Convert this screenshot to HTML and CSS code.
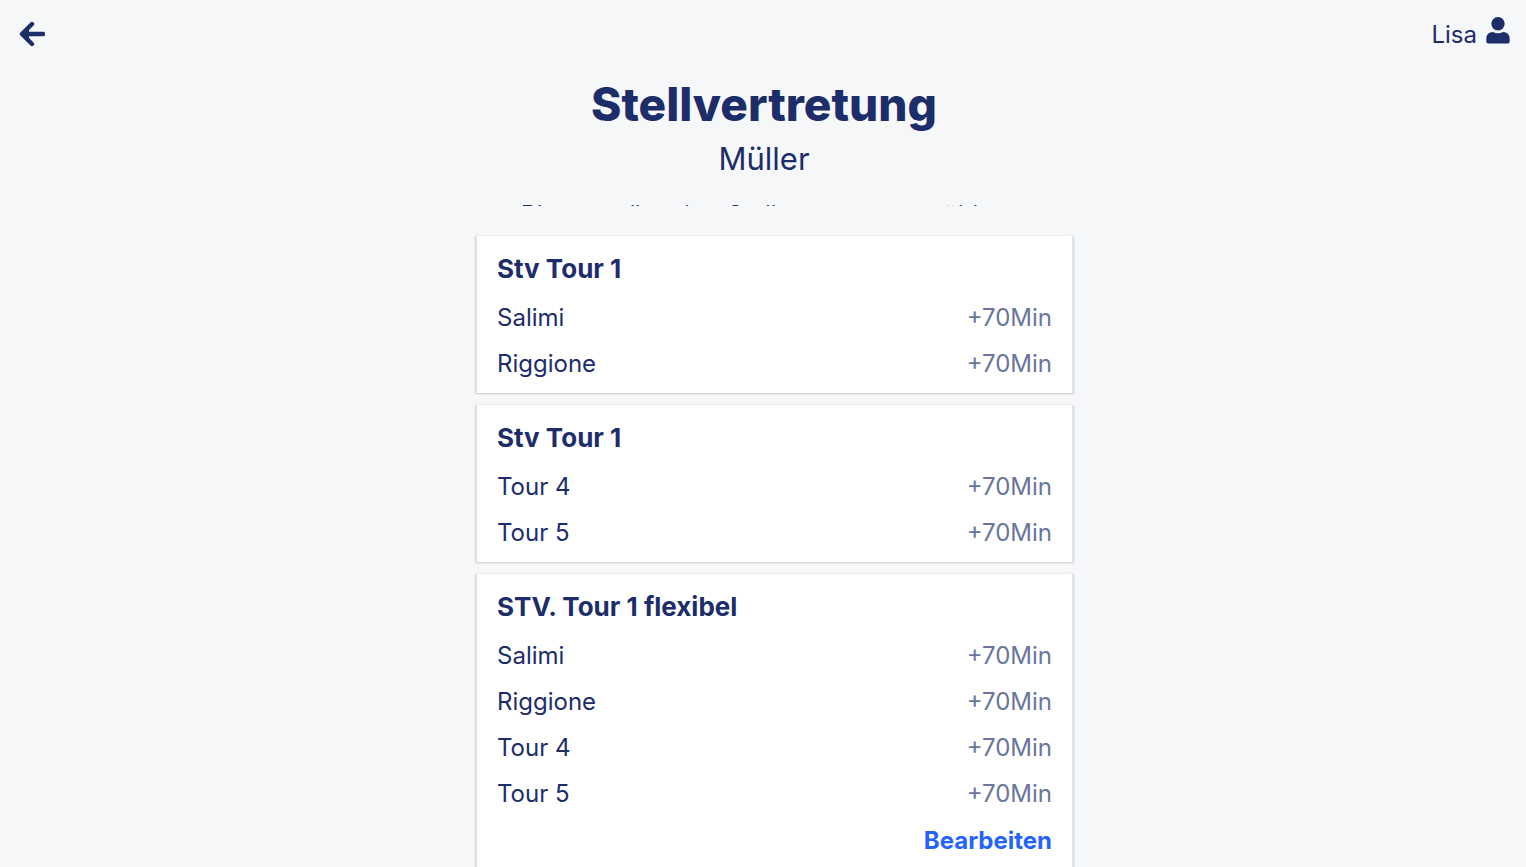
FILE: index.html
```html
<!DOCTYPE html>
<html lang="de">
<head>
  <meta charset="UTF-8">
  <meta name="viewport" content="width=device-width, initial-scale=1.0">
  <title>Stellvertretung</title>
  <link rel="stylesheet" href="styles.css">
</head>
<body>
  <nav class="topbar">
    <a class="back" href="#" aria-label="Zurück">
      <svg viewBox="0 0 26 26" width="26" height="26">
        <path d="M13 3L3 13l10 10M4 13h20" fill="none" stroke="currentColor" stroke-width="4.4" stroke-linecap="round" stroke-linejoin="round"/>
        <path d="M3 13l7-7v14z"/>
      </svg>
    </a>
    <a class="user" href="#">
      <span>Lisa</span>
      <svg viewBox="0 0 24 28" width="24" height="28">
        <circle cx="12" cy="6.700" r="6.700"/>
        <path d="M7 15c3 1.600 7 1.600 10 0 4.500 0 6.700 3 6.700 7v2.500q0 2-2 2H2.300q-2 0-2-2V22c0-4 2.200-7 6.700-7z"/>
      </svg>
    </a>
  </nav>

  <header class="page-header">
    <h1>Stellvertretung</h1>
    <h2>Müller</h2>
    <p class="hint">Bitte gewünschte Stellvertreter auswählen</p>
  </header>

  <main class="list">
    <section class="card">
      <h3>Stv Tour 1</h3>
      <ul>
        <li><span>Salimi</span><span class="time">+70Min</span></li>
        <li><span>Riggione</span><span class="time">+70Min</span></li>
      </ul>
    </section>
    <section class="card">
      <h3>Stv Tour 1</h3>
      <ul>
        <li><span>Tour 4</span><span class="time">+70Min</span></li>
        <li><span>Tour 5</span><span class="time">+70Min</span></li>
      </ul>
    </section>
    <section class="card">
      <h3>STV. Tour 1 flexibel</h3>
      <ul>
        <li><span>Salimi</span><span class="time">+70Min</span></li>
        <li><span>Riggione</span><span class="time">+70Min</span></li>
        <li><span>Tour 4</span><span class="time">+70Min</span></li>
        <li><span>Tour 5</span><span class="time">+70Min</span></li>
      </ul>
      <button class="edit" type="button">Bearbeiten</button>
    </section>
  </main>
</body>
</html>
```
FILE: styles.css
```css
* {
  box-sizing: border-box;
}
body {
  display: flex;
  flex-direction: column;
  height: 100vh;
  margin: 0;
  overflow: hidden;
  background: #f6f7f9;
  color: #1d2d69;
  font-family: Inter, sans-serif;
  font-size: 24px;
  line-height: 30px;
}
h1, h2, h3, p, ul {
  margin: 0;
  padding: 0;
}
a {
  color: inherit;
  text-decoration: none;
}
svg {
  display: block;
  fill: currentColor;
}
.topbar {
  display: flex;
  justify-content: space-between;
  align-items: flex-start;
  height: 75px;
  padding: 17px 16px 0 19px;
}
.back {
  padding-top: 4px;
}
.user {
  display: flex;
  gap: 9px;
}
.user span {
  padding-top: 3px;
}
.page-header {
  flex: none;
  padding-left: 2px;
  text-align: center;
}
h1 {
  font-size: 46px;
  line-height: 58px;
  font-weight: 800;
}
h2 {
  font-size: 31px;
  line-height: 52px;
  font-weight: 400;
}
/* only the top edge stays visible above the list */
.hint {
  height: 21px;
  padding-top: 15px;
  overflow: hidden;
  font-size: 25px;
  font-weight: 300;
}
.list {
  flex: 1;
  width: 100%;
  max-width: 624px;
  min-height: 0;
  margin: 0 auto;
  padding: 30px 1px 0 25px;
  overflow: hidden;
}
.card {
  margin-bottom: 12px;
  padding: 17px 20px 6px;
  border: solid #dfe2ea;
  border-width: 0 2px 0 1px;
  background: #fff;
  box-shadow: -1px 0 2px rgba(0, 0, 0, 0.1), 0 1px 2px rgba(0, 0, 0, 0.15);
}
h3 {
  padding-bottom: 10px;
  font-size: 26px;
  line-height: 32px;
  font-weight: 700;
}
ul {
  list-style: none;
}
li {
  display: flex;
  justify-content: space-between;
  padding: 8px 0;
}
.time {
  color: #69759d;
}
.edit {
  display: block;
  margin-left: auto;
  padding: 9px 0;
  border: 0;
  background: none;
  color: #2563ff;
  font: inherit;
  font-weight: 700;
}
```
